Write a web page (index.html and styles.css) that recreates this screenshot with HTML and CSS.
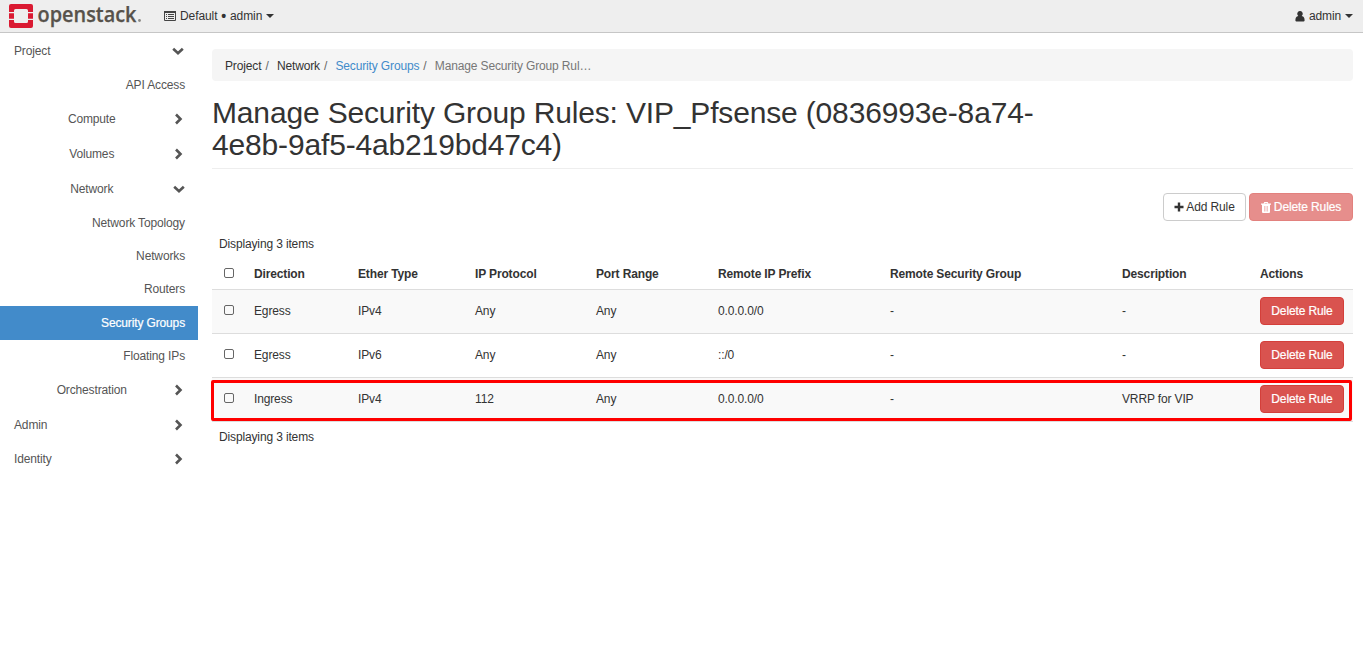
FILE: index.html
```html
<!DOCTYPE html>
<html lang="en">
<head>
<meta charset="utf-8">
<title>Manage Security Group Rules</title>
<link rel="stylesheet" href="styles.css">
</head>
<body>
<svg class="defs" width="0" height="0">
  <symbol id="right" viewBox="0 0 10 12"><path d="M2 1.500 6.500 6 2 10.500" fill="none" stroke="currentColor" stroke-width="2.600"/></symbol>
  <symbol id="down" viewBox="0 0 12 10"><path d="M1.200 2.700 6 7.300l4.800-4.600" fill="none" stroke="currentColor" stroke-width="2.600"/></symbol>
</svg>
<header class="topbar">
  <a class="brand">
    <svg class="logo" width="136" height="30" viewBox="0 0 136 30">
      <g fill="#da1a32">
        <path d="M2 1h20a2 2 0 0 1 2 2v6h-5V7.500a1.500 1.500 0 0 0-1.500-1.500h-11A1.500 1.500 0 0 0 5 7.500V9H0V3a2 2 0 0 1 2-2z"/>
        <path d="M0 10.200h5v5.600H0zM19 10.200h5v5.600h-5z"/>
        <path d="M0 17h5v1.500A1.500 1.500 0 0 0 6.500 20h11a1.500 1.500 0 0 0 1.500-1.500V17h5v6a2 2 0 0 1-2 2H2a2 2 0 0 1-2-2z"/>
      </g>
      <text class="wordmark" x="28.500" y="19" textLength="99" lengthAdjust="spacingAndGlyphs">openstack</text>
      <circle cx="130.500" cy="17.500" r="1.400" fill="#8b8984"/>
    </svg>
  </a>
  <div class="context">
    <svg width="12" height="10" viewBox="0 0 12 10"><path d="M.5 1h11v8.500H.5z" fill="none" stroke="#444"/><path d="M0 0h12v2H0zM2 3h1v1H2zM4 3h6v1H4zM2 5h1v1H2zM4 5h6v1H4zM2 7h1v1H2zM4 7h6v1H4z" fill="#444"/></svg>
    <span>Default <b class="dot">•</b> admin</span><i class="caret"></i>
  </div>
  <div class="user">
    <svg width="10" height="11" viewBox="0 0 10 11"><path d="M5 0a2.600 2.800 0 0 1 1.700 5C9 5.500 9.600 7 9.600 9.200 9.600 10.200 9 10.500 8 10.500H2C1 10.500.4 10.200.4 9.200.4 7 1 5.500 3.300 5A2.600 2.800 0 0 1 5 0z" fill="#333"/></svg>
    <span>admin</span><i class="caret"></i>
  </div>
</header>
<div class="layout">
  <nav class="sidebar">
    <div class="item top">Project<svg class="down"><use href="#down"/></svg></div>
    <div class="item leaf mid">API Access</div>
    <div class="item group">Compute<svg class="right"><use href="#right"/></svg></div>
    <div class="item group tall">Volumes<svg class="right"><use href="#right"/></svg></div>
    <div class="item group tall">Network<svg class="down"><use href="#down"/></svg></div>
    <div class="item leaf low">Network Topology</div>
    <div class="item leaf low">Networks</div>
    <div class="item leaf low">Routers</div>
    <div class="item leaf mid active">Security Groups</div>
    <div class="item leaf">Floating IPs</div>
    <div class="item group">Orchestration<svg class="right"><use href="#right"/></svg></div>
    <div class="item top tall">Admin<svg class="right"><use href="#right"/></svg></div>
    <div class="item top">Identity<svg class="right"><use href="#right"/></svg></div>
  </nav>
  <main class="content">
    <ol class="breadcrumb">
      <li>Project</li><li>Network</li><li><a>Security Groups</a></li><li class="current">Manage Security Group Rul…</li>
    </ol>
    <div class="page-header"><h1>Manage Security Group Rules: VIP_Pfsense (0836993e-8a74-<br>4e8b-9af5-4ab219bd47c4)</h1></div>
    <div class="actions">
      <button class="btn add"><svg width="10" height="10" viewBox="0 0 10 10"><path d="M3.800.5h2.400v3.300h3.300v2.400H6.200v3.300H3.800V6.200H.5V3.800h3.300z" fill="#333"/></svg>Add Rule</button>
      <button class="btn danger disabled"><svg width="10" height="11" viewBox="0 0 10 11"><path fill="#fff" fill-rule="evenodd" d="M3.300 0h3.400l.7 1.500H10v1.300H9V10q0 1-1 1H2q-1 0-1-1V2.800H0V1.500h2.600zM3.800 1l-.2.500h2.800L6.200 1zM3 4v5.500h.5V4zM4.750 4v5.500h.5V4zM6.500 4v5.500H7V4z"/></svg>Delete Rules</button>
    </div>
    <div class="table-wrap">
      <div class="count">Displaying 3 items</div>
      <table>
        <colgroup><col class="c1"><col class="c2"><col class="c3"><col class="c4"><col class="c5"><col class="c6"><col class="c7"><col class="c8"><col class="c9"></colgroup>
        <thead><tr><th><i class="check"></i></th><th>Direction</th><th>Ether Type</th><th>IP Protocol</th><th>Port Range</th><th>Remote IP Prefix</th><th>Remote Security Group</th><th>Description</th><th>Actions</th></tr></thead>
        <tbody>
          <tr><td><i class="check"></i></td><td>Egress</td><td>IPv4</td><td>Any</td><td>Any</td><td>0.0.0.0/0</td><td>-</td><td>-</td><td><button class="btn danger">Delete Rule</button></td></tr>
          <tr><td><i class="check"></i></td><td>Egress</td><td>IPv6</td><td>Any</td><td>Any</td><td>::/0</td><td>-</td><td>-</td><td><button class="btn danger">Delete Rule</button></td></tr>
          <tr><td><i class="check"></i></td><td>Ingress</td><td>IPv4</td><td>112</td><td>Any</td><td>0.0.0.0/0</td><td>-</td><td>VRRP for VIP</td><td><button class="btn danger">Delete Rule</button></td></tr>
        </tbody>
      </table>
      <div class="highlight"></div>
      <div class="count foot">Displaying 3 items</div>
    </div>
  </main>
</div>
</body>
</html>
```

FILE: styles.css
```css
* { box-sizing: border-box; }
body { margin: 0; background: #fff; color: #333; font: 12px/17px "Liberation Sans", Arial, sans-serif; letter-spacing: -.14px; }
.defs { position: absolute; }
svg { display: block; flex: none; }
.logo { overflow: visible; }

.topbar { display: flex; align-items: flex-start; height: 33px; padding: 0 10px 0 9px; background: #eee; border-bottom: 1px solid #c6c6c6; }
.brand { padding-top: 3px; }
.wordmark { font: 600 21px/24px "Open Sans", sans-serif; letter-spacing: 0; fill: #57524b; stroke: #57524b; stroke-width: .25px; }
.context, .user { display: flex; align-items: center; height: 32px; }
.context { margin-left: 19px; }
.context span { margin-left: 4px; letter-spacing: -.08px; }
.dot { display: inline-block; width: 6px; font-size: 14px; line-height: 12px; text-align: center; vertical-align: -1px; }
.user { margin-left: auto; }
.user span { margin-left: 4px; }
.caret { margin-left: 4px; border: 4px solid transparent; border-top-color: #333; border-bottom: 0; }

.layout { display: flex; }
.sidebar { width: 198px; padding-top: 1px; flex: none; color: #555; }
.item { display: flex; align-items: center; justify-content: space-between; height: 34px; padding: 0 14px; }
.item.tall { height: 35px; padding-top: 1px; }
.item.leaf { justify-content: flex-end; height: 33px; padding-right: 13px; }
.item.leaf.mid { height: 34px; }
.item.leaf.low { padding-top: 2px; }
.item.group { display: grid; grid-template-columns: 1fr 12px; padding-right: 13.5px; padding-left: 11px; text-align: center; justify-items: center; }
.item.active { margin-top: 1px; background: #428bca; color: #fff; -webkit-text-stroke: .2px #fff; }
.right { width: 10px; height: 12px; }
.down { width: 12px; height: 10px; }

.content { flex: 1; padding: 16px 10px 0 14px; }
.breadcrumb { display: flex; height: 32px; margin: 0; padding: 9px 13px 7px; list-style: none; background: #f5f5f5; border-radius: 4px; }
.breadcrumb li + li::before { content: "/"; padding: 0 8.3px 0 4px; color: #666; }
.breadcrumb a { color: #428bca; }
.breadcrumb .current { color: #777; }
.page-header { height: 88px; padding-top: 16px; border-bottom: 1px solid #eee; }
h1 { margin: 0; font-size: 30px; font-weight: 400; line-height: 32px; letter-spacing: -.16px; }
.actions { display: flex; justify-content: flex-end; gap: 3px; margin-top: 24px; }
.btn { display: flex; align-items: center; justify-content: center; gap: 3px; height: 28px; padding: 0; border: 1px solid #ccc; border-radius: 4px; background: #fff; color: #333; font: inherit; letter-spacing: -.12px; white-space: nowrap; }
.btn.add { width: 83px; gap: 2px; }
.btn.danger { width: 84px; border-color: #d43f3a; background: #d9534f; color: #fff; -webkit-text-stroke: .2px #fff; }
.btn.disabled { width: 104px; opacity: .65; }

.table-wrap { position: relative; margin-top: 15px; }
.count { height: 22px; padding: 0 7px; }
.count.foot { padding-top: 7px; }
table { width: 1141px; table-layout: fixed; border-collapse: separate; border-spacing: 0; border-bottom: 1px solid #ddd; }
.c1 { width: 34px; } .c2 { width: 104px; } .c3 { width: 117px; } .c4 { width: 121px; } .c5 { width: 122px; }
.c6 { width: 172px; } .c7 { width: 232px; } .c8 { width: 138px; } .c9 { width: 101px; }
th { height: 31px; padding: 1px 8px 0; text-align: left; }
td { height: 44px; padding: 7px 8px 8px; border-top: 1px solid #ddd; }
tbody tr:nth-child(odd) { background: #f9f9f9; }
.check { display: block; width: 10px; height: 10px; margin: 0 0 2px 4px; border: 1px solid #666; border-radius: 2px; }
.highlight { position: absolute; left: -1px; top: 144px; width: 1141px; height: 41px; border: 3px solid #f00; border-radius: 2px; }
```
